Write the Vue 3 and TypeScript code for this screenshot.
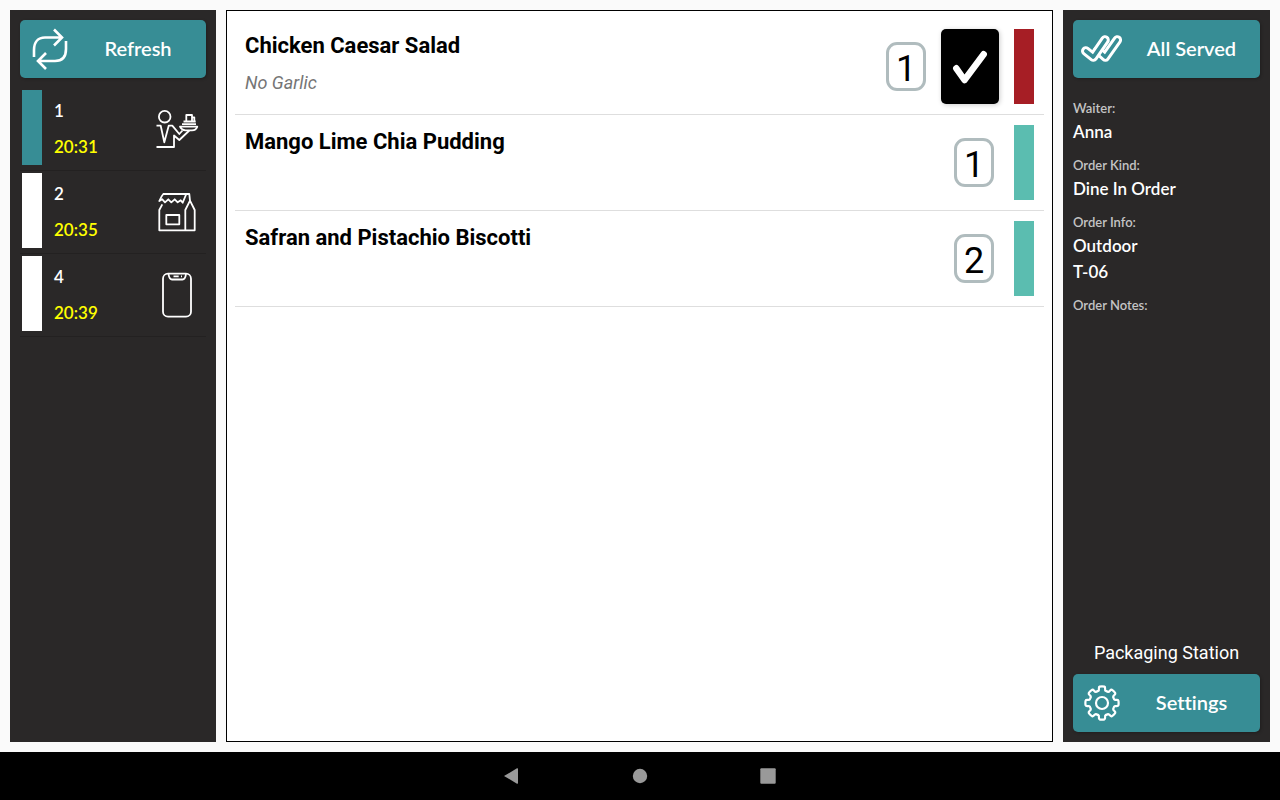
<script setup lang="ts">
import { computed, ref } from 'vue'

type OrderKind = 'dine-in' | 'takeaway' | 'online'

interface Order {
  id: number
  time: string
  kind: OrderKind
}

interface Item {
  name: string
  note?: string
  quantity: number
  ready: boolean
}

interface Detail {
  label: string
  values: string[]
}

const orders: Order[] = [
  { id: 1, time: '20:31', kind: 'dine-in' },
  { id: 2, time: '20:35', kind: 'takeaway' },
  { id: 4, time: '20:39', kind: 'online' },
]

const items: Item[] = [
  { name: 'Chicken Caesar Salad', note: 'No Garlic', quantity: 1, ready: false },
  { name: 'Mango Lime Chia Pudding', quantity: 1, ready: true },
  { name: 'Safran and Pistachio Biscotti', quantity: 2, ready: true },
]

const details: Detail[] = [
  { label: 'Waiter:', values: ['Anna'] },
  { label: 'Order Kind:', values: ['Dine In Order'] },
  { label: 'Order Info:', values: ['Outdoor', 'T-06'] },
  { label: 'Order Notes:', values: [] },
]

const selected = ref(1)

// Outline of an eight-toothed gear centred on the origin, with rounded corners
const gearPath = computed(() => {
  const corners: [number, number][] = [
    [12.6, -0.33],
    [12.9, -0.23],
    [16.4, -0.2],
    [16.7, -0.1],
    [16.7, 0.1],
    [16.4, 0.2],
    [12.9, 0.23],
    [12.6, 0.33],
  ]
  const points: [number, number][] = []
  for (let tooth = 0; tooth < 8; tooth++) {
    for (const [radius, offset] of corners) {
      const angle = (tooth * Math.PI) / 4 + offset
      points.push([radius * Math.cos(angle), radius * Math.sin(angle)])
    }
  }
  const middle = (a: [number, number], b: [number, number]) =>
    `${((a[0] + b[0]) / 2).toFixed(2)} ${((a[1] + b[1]) / 2).toFixed(2)}`
  const curves = points.map((point, i) => {
    const next = points[(i + 1) % points.length]
    return `Q${point[0].toFixed(2)} ${point[1].toFixed(2)} ${middle(point, next)}`
  })
  return `M${middle(points[points.length - 1], points[0])}${curves.join('')}Z`
})
</script>

<template>
  <div class="screen">
    <div class="board">
      <aside class="side">
        <button class="action" type="button">
          <svg class="action-icon" width="42" height="42" viewBox="-2 0 42 42" aria-hidden="true">
            <path d="M4 29V22C4 14 8 9.500 15 9.500H31M24 1.500L32 9.500L24 17.500" />
            <path d="M36 13V21C36 29 32 33 25 33H9M16 25L8 33L16 41" />
          </svg>
          <span class="action-text">Refresh</span>
        </button>
        <ul class="orders">
          <li v-for="order in orders" :key="order.id">
            <button class="order" type="button" :aria-pressed="selected === order.id" @click="selected = order.id">
              <span class="marker" :class="{ active: selected === order.id }"></span>
              <span class="order-text">
                <span class="order-id">{{ order.id }}</span>
                <span class="order-time">{{ order.time }}</span>
              </span>
              <svg v-if="order.kind === 'dine-in'" class="kind" width="46" height="46" viewBox="-1 -2 46 46" aria-hidden="true">
                <circle cx="9.7" cy="8.700" r="5.800" />
                <path d="M1.500 17.700H5.700L9.300 34.300L13.700 17.700H17.300L24.300 26L27.500 22.500" />
                <path d="M34.300 22.500L24.300 32L19 27.500V39H1.500" />
                <path d="M25 18.700H42.300C41.500 21 39.500 22.300 37 22.300H30.500C28 22.300 26 21 25 18.700Z" />
                <path d="M27 16.200H41M28.500 13.500H40.700M31.300 13V7H37V13M37 9.300H39.300V13" />
              </svg>
              <svg v-else-if="order.kind === 'takeaway'" class="kind" width="46" height="46" viewBox="-3 -2 46 46" aria-hidden="true">
                <path d="M5.300 13.300L2.300 19V39.300H37.700V19L33 9.700L32.300 3H6.300Q4.500 5 2.300 10L5.300 8.300L8 11.300L11.300 8.300L14.300 11.300L17.700 8.300L20.700 11.300L23.700 9.300L25.700 11.700L29.300 3" />
                <path d="M33 9.700L28.300 19V39.300M9.300 24H22.300V33.300H9.300Z" />
              </svg>
              <svg v-else class="kind" width="46" height="46" viewBox="-3 0 46 46" aria-hidden="true">
                <rect x="6" y="1.700" width="28" height="43" rx="5" />
                <path d="M11.500 2C12 5 12.300 7.500 15 7.500H25.500C28.200 7.500 28.500 5 29 2M16.500 4.400H21.700M24 4.400H25" />
              </svg>
            </button>
          </li>
        </ul>
      </aside>

      <main class="items">
        <div v-for="item in items" :key="item.name" class="item">
          <div class="item-text">
            <h2>{{ item.name }}</h2>
            <p v-if="item.note">{{ item.note }}</p>
          </div>
          <div class="item-state" :class="{ pending: !item.ready }">
            <span class="quantity">{{ item.quantity }}</span>
            <button v-if="!item.ready" class="check" type="button" aria-label="Mark as ready">
              <svg width="58" height="75" viewBox="0 0 58 75" aria-hidden="true">
                <path d="M15.300 39.300L23.500 51L42.700 25.300" />
              </svg>
            </button>
            <span class="status"></span>
          </div>
        </div>
      </main>

      <aside class="side">
        <button class="action" type="button">
          <svg class="action-icon" width="42" height="42" viewBox="26 28 42 42" aria-hidden="true">
            <path class="tick-edge" d="M43 50.500L50.300 57L62.300 40" />
            <path class="tick-fill" d="M43 50.500L50.300 57L62.300 40" />
            <path class="tick-edge" d="M30.800 51L38.300 57L50 40" />
            <path class="tick-fill" d="M30.800 51L38.300 57L50 40" />
          </svg>
          <span class="action-text">All Served</span>
        </button>
        <dl class="details">
          <div v-for="detail in details" :key="detail.label" class="detail">
            <dt>{{ detail.label }}</dt>
            <dd v-for="value in detail.values" :key="value">{{ value }}</dd>
          </div>
        </dl>
        <p class="station">Packaging Station</p>
        <button class="action" type="button">
          <svg class="action-icon" width="42" height="42" viewBox="-21 -21 42 42" aria-hidden="true">
            <path class="thin" :d="gearPath" />
            <circle class="thin" r="6" />
          </svg>
          <span class="action-text">Settings</span>
        </button>
      </aside>
    </div>

    <nav class="system-bar" aria-label="System">
      <button type="button" aria-label="Back">
        <svg width="18" height="18" viewBox="0 0 18 18"><path d="M1 9L14 1.300Q15 1 15 2V16Q15 17 14 16.700Z" /></svg>
      </button>
      <button type="button" aria-label="Home">
        <svg width="18" height="18" viewBox="0 0 18 18"><circle cx="9" cy="9" r="7.200" /></svg>
      </button>
      <button type="button" aria-label="Recent apps">
        <svg width="18" height="18" viewBox="0 0 18 18"><rect x="1.300" y="1.300" width="15.400" height="15.400" rx="1" /></svg>
      </button>
    </nav>
  </div>
</template>

<style>
body {
  margin: 0;
}
</style>

<style scoped>
.screen {
  display: flex;
  flex-direction: column;
  min-height: 100vh;
  background: #fafafa;
  font-family: Lato, "Liberation Sans", sans-serif;
  font-variant-ligatures: none;
}

button {
  margin: 0;
  padding: 0;
  border: 0;
  background: none;
  color: inherit;
  font: inherit;
  font-variant-ligatures: none;
  text-align: left;
  cursor: pointer;
}

.board {
  flex: 1;
  display: grid;
  grid-template-columns: 206px minmax(0, 1fr) 207px;
  gap: 10px;
  padding: 10px;
}

.side {
  display: flex;
  flex-direction: column;
  padding: 10px;
  background: #2a2828;
  color: #fff;
}

.action {
  display: flex;
  align-items: center;
  height: 58px;
  padding: 0 8px;
  border-radius: 5px;
  background: #378d95;
  box-shadow: 1px 1px 3px rgba(0, 0, 0, 0.25);
}

.action-icon {
  flex: none;
  overflow: visible;
  fill: none;
  stroke: #fff;
  stroke-width: 2.6;
}

.action-icon .thin {
  stroke-width: 2.2;
  stroke-linejoin: round;
}

.action-icon .tick-edge,
.action-icon .tick-fill {
  stroke-linecap: round;
  stroke-linejoin: round;
}

.action-icon .tick-edge {
  stroke-width: 9.6;
}

.action-icon .tick-fill {
  stroke: #378d95;
  stroke-width: 3.6;
}

.action-text {
  flex: 1;
  margin-left: 8px;
  padding-bottom: 2px;
  font-size: 20px;
  font-weight: 600;
  line-height: 28px;
  text-align: center;
}

.orders {
  margin: 10px 0 0;
  padding: 0;
  list-style: none;
}

.order {
  display: flex;
  align-items: center;
  width: 100%;
  height: 83px;
  padding: 0 6px 0 2px;
  border-bottom: 1px solid #232121;
}

.marker {
  align-self: flex-start;
  width: 20px;
  height: 75px;
  margin-top: 2px;
  background: #fff;
}

.marker.active {
  background: #378d95;
}

.order-text {
  flex: 1;
  margin-left: 12px;
  font-size: 17px;
  font-weight: 600;
  line-height: 36px;
}

.order-id,
.order-time {
  display: block;
}

.order-time {
  color: #ff0;
}

.kind {
  fill: none;
  stroke: #fff;
  stroke-width: 1.8;
  stroke-linejoin: round;
}

.items {
  padding: 8px;
  border: 1px solid #000;
  background: #fff;
  color: #000;
  font-family: Roboto, "Liberation Sans", sans-serif;
}

.item {
  display: flex;
  justify-content: space-between;
  padding: 10px;
  border-bottom: 1px solid #dedede;
}

.item-text h2 {
  margin: 0;
  font-size: 22px;
  font-weight: 700;
  line-height: 34px;
}

.item-text p {
  margin: 8px 0 0;
  color: #757575;
  font-size: 18px;
  font-style: italic;
  line-height: 24px;
}

.item-state {
  display: flex;
  align-items: center;
  gap: 20px;
}

.item-state.pending {
  gap: 15px;
}

.quantity {
  box-sizing: border-box;
  width: 40px;
  height: 49px;
  padding-top: 3px;
  border: 3px solid #b0bcbe;
  border-radius: 11px;
  font-size: 36px;
  line-height: 43px;
  text-align: center;
}

.check {
  height: 75px;
  border-radius: 5px;
  background: #000;
  box-shadow: 1px 1px 5px rgba(0, 0, 0, 0.2);
}

.check svg {
  display: block;
  fill: none;
  stroke: #fff;
  stroke-width: 6.5;
  stroke-linecap: round;
  stroke-linejoin: round;
}

.status {
  width: 20px;
  height: 75px;
  background: #5bbdb0;
}

.pending .status {
  background: #a61e25;
}

.details {
  flex: 1;
  margin: 19px 0 0;
}

.detail {
  margin-bottom: 9px;
}

.detail dt {
  color: #c4c4c4;
  font-size: 13px;
  font-weight: 600;
  line-height: 22px;
}

.detail dd {
  margin: 0;
  font-size: 17px;
  font-weight: 600;
  line-height: 26px;
}

.station {
  margin: 0 0 9px;
  font-family: Roboto, "Liberation Sans", sans-serif;
  font-size: 18px;
  line-height: 24px;
  text-align: center;
}

.system-bar {
  display: flex;
  justify-content: center;
  height: 48px;
  background: #000;
}

.system-bar button {
  display: flex;
  align-items: center;
  justify-content: center;
  width: 128px;
}

.system-bar svg {
  fill: #999;
}
</style>
